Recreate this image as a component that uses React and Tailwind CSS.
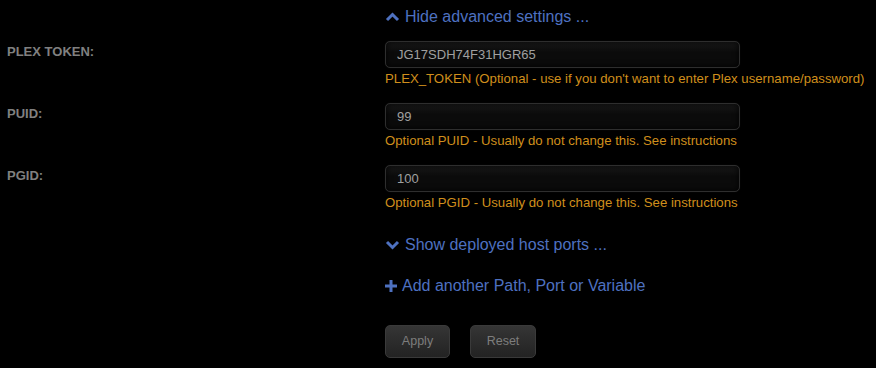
import { useState } from 'react';

const ChevronUp = () => (
  <svg width="15" height="10" viewBox="0 0 15 10" className="mr-[5px]">
    <path d="M2 8 L7.5 2.5 L13 8" fill="none" stroke="#4e71c0" strokeWidth="3" strokeLinecap="butt" />
  </svg>
);

const ChevronDown = () => (
  <svg width="15" height="10" viewBox="0 0 15 10" className="mr-[5px]">
    <path d="M2 2 L7.5 7.5 L13 2" fill="none" stroke="#4e71c0" strokeWidth="3" strokeLinecap="butt" />
  </svg>
);

const Plus = () => (
  <svg width="12" height="12" viewBox="0 0 12 12" className="mr-[5px]">
    <path d="M6 0 V12 M0 6 H12" stroke="#4e71c0" strokeWidth="3" />
  </svg>
);

function Field({ label, value, help, onChange }) {
  return (
    <div className="flex">
      <div className="w-[385px] pl-[7px] pt-[1px] text-[13px] leading-[20px] font-bold text-[#808080]">{label}</div>
      <div>
        <input
          value={value}
          onChange={onChange}
          className="w-[355px] h-[27px] px-[11px] rounded-[5px] border border-[#2e2e2e] bg-[#0a0a0a] text-[13px] text-[#a0a0a0] outline-none shadow-[inset_0_0_6px_rgba(0,0,0,0.9),0_0_1px_rgba(255,255,255,0.08)]"
          style={{ backgroundImage: 'linear-gradient(#1a1a1a, #0b0b0b 40%)' }}
        />
        <div className="mt-[1px] text-[13.2px] leading-[20px] text-[#d08f1c]">{help}</div>
      </div>
    </div>
  );
}

export default function App() {
  const [token, setToken] = useState('JG17SDH74F31HGR65');
  const [puid, setPuid] = useState('99');
  const [pgid, setPgid] = useState('100');

  return (
    <div className="w-[876px] h-[368px] bg-black overflow-hidden" style={{ fontFamily: '"Liberation Sans", Arial, sans-serif' }}>
      <div className="pl-[385px] pt-[5px] h-[41px]">
        <a className="flex items-center text-[16px] leading-[24px] text-[#4e71c0] cursor-pointer">
          <ChevronUp />
          Hide advanced settings ...
        </a>
      </div>
      <div className="flex flex-col gap-[14px]">
        <Field
          label="PLEX TOKEN:"
          value={token}
          onChange={(e) => setToken(e.target.value)}
          help="PLEX_TOKEN (Optional - use if you don't want to enter Plex username/password)"
        />
        <Field
          label="PUID:"
          value={puid}
          onChange={(e) => setPuid(e.target.value)}
          help="Optional PUID - Usually do not change this. See instructions"
        />
        <Field
          label="PGID:"
          value={pgid}
          onChange={(e) => setPgid(e.target.value)}
          help="Optional PGID - Usually do not change this. See instructions"
        />
      </div>
      <div className="pl-[385px] pt-[20px]">
        <a className="flex items-center text-[16px] leading-[24px] text-[#4e71c0] cursor-pointer">
          <ChevronDown />
          Show deployed host ports ...
        </a>
        <a className="mt-[17px] flex items-center text-[16px] leading-[24px] text-[#4e71c0] cursor-pointer">
          <Plus />
          Add another Path, Port or Variable
        </a>
        <div className="mt-[27px] flex gap-[20px]">
          <button className="w-[65px] h-[33px] rounded-[5px] border border-[#3a3a3a] bg-gradient-to-b from-[#353535] to-[#232323] text-[12.5px] text-[#7d7d7d]">
            Apply
          </button>
          <button className="w-[66px] h-[33px] rounded-[5px] border border-[#3a3a3a] bg-gradient-to-b from-[#353535] to-[#232323] text-[12.5px] text-[#7d7d7d]">
            Reset
          </button>
        </div>
      </div>
    </div>
  );
}
